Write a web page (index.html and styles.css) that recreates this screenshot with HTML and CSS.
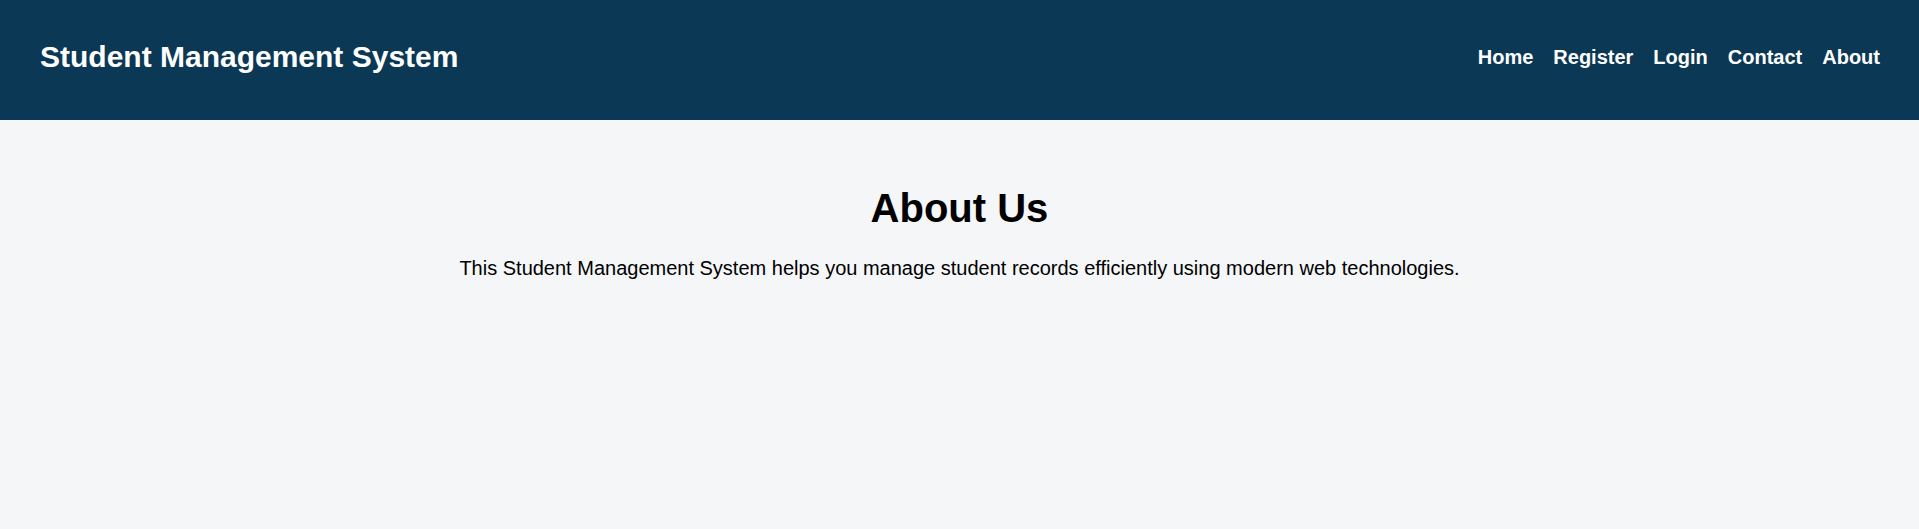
FILE: index.html
```html
<!DOCTYPE html>
<html lang="en">
<head>
<meta charset="utf-8">
<title>About Us - Student Management System</title>
<link rel="stylesheet" href="styles.css">
</head>
<body>
<header class="site-header">
  <div class="brand">Student Management System</div>
  <nav class="nav">
    <a href="#">Home</a>
    <a href="#">Register</a>
    <a href="#">Login</a>
    <a href="#">Contact</a>
    <a href="#">About</a>
  </nav>
</header>
<main class="content">
  <h1 class="title">About Us</h1>
  <p class="lead">This Student Management System helps you manage student records efficiently using modern web technologies.</p>
</main>
</body>
</html>
```

FILE: styles.css
```css
html, body {
  margin: 0;
  padding: 0;
}
body {
  font-family: "Liberation Sans", Arial, sans-serif;
  background: #f4f6f8;
  color: #000;
  min-height: 529px;
}
.site-header {
  height: 120px;
  box-sizing: border-box;
  padding: 0 39px 0 40px;
  background: #0b3854;
  display: flex;
  align-items: center;
  justify-content: space-between;
}
.brand {
  color: #fff;
  font-size: 30px;
  font-weight: bold;
  margin-top: -7px;
}
.nav {
  display: flex;
  gap: 20px;
  margin-top: -6px;
}
.nav a {
  color: #fff;
  text-decoration: none;
  font-weight: bold;
  font-size: 20px;
}
.content {
  text-align: center;
  padding: 66px 20px 0;
}
.title {
  font-size: 40px;
  margin: 0 0 26px;
}
.lead {
  font-size: 20px;
  margin: 0;
}
```
